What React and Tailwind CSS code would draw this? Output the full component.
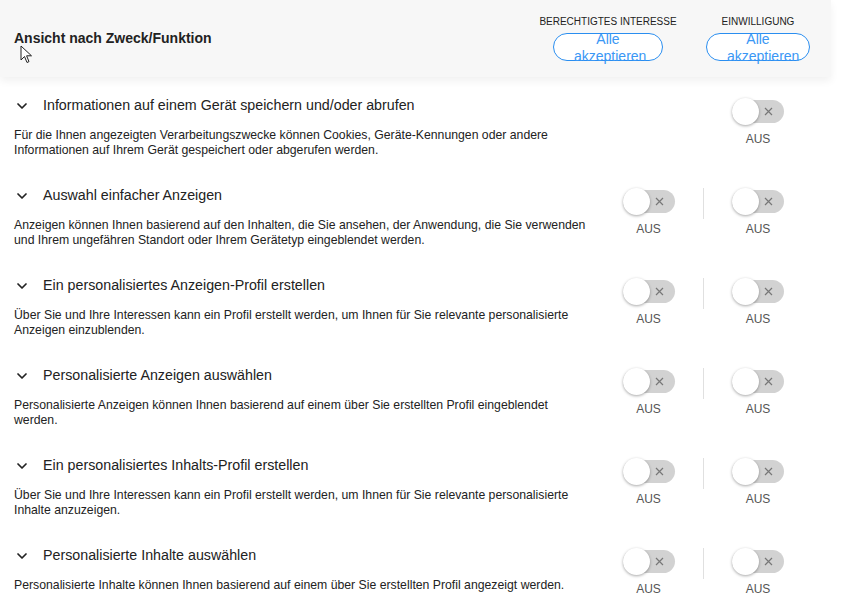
import { ChevronDown } from "lucide-react";

const purposes = [
  {
    title: "Informationen auf einem Gerät speichern und/oder abrufen",
    text: "Für die Ihnen angezeigten Verarbeitungszwecke können Cookies, Geräte-Kennungen oder andere Informationen auf Ihrem Gerät gespeichert oder abgerufen werden.",
    legit: false,
  },
  {
    title: "Auswahl einfacher Anzeigen",
    text: "Anzeigen können Ihnen basierend auf den Inhalten, die Sie ansehen, der Anwendung, die Sie verwenden und Ihrem ungefähren Standort oder Ihrem Gerätetyp eingeblendet werden.",
    legit: true,
  },
  {
    title: "Ein personalisiertes Anzeigen-Profil erstellen",
    text: "Über Sie und Ihre Interessen kann ein Profil erstellt werden, um Ihnen für Sie relevante personalisierte Anzeigen einzublenden.",
    legit: true,
  },
  {
    title: "Personalisierte Anzeigen auswählen",
    text: "Personalisierte Anzeigen können Ihnen basierend auf einem über Sie erstellten Profil eingeblendet werden.",
    legit: true,
  },
  {
    title: "Ein personalisiertes Inhalts-Profil erstellen",
    text: "Über Sie und Ihre Interessen kann ein Profil erstellt werden, um Ihnen für Sie relevante personalisierte Inhalte anzuzeigen.",
    legit: true,
  },
  {
    title: "Personalisierte Inhalte auswählen",
    text: "Personalisierte Inhalte können Ihnen basierend auf einem über Sie erstellten Profil angezeigt werden.",
    legit: true,
  },
];

function Toggle() {
  return (
    <div className="flex flex-col items-center">
      <div className="relative mt-[15px] h-[23px] w-[52px] rounded-full bg-[#d2d2d2]">
        <div className="absolute left-0 top-[-2px] h-[27px] w-[27px] rounded-full bg-white shadow-[0_1px_3px_rgba(0,0,0,0.35)]" />
        <svg className="absolute right-[11px] top-[7px]" width="9" height="9" viewBox="0 0 9 9">
          <path d="M1 1L8 8M8 1L1 8" stroke="#777" strokeWidth="1.2" fill="none" />
        </svg>
      </div>
      <div className="mt-[9px] text-[12px] leading-[14px] text-[#555]">AUS</div>
    </div>
  );
}

function HeaderColumn({ label, width }) {
  return (
    <div className="flex flex-col items-center">
      <div className="text-[10px] leading-[12px] text-[#222]">{label}</div>
      <button
        className={`${width} mt-[5px] h-[28px] rounded-full border border-[#2a8ef0] bg-white px-[20px] text-center text-[14px] leading-[17px] text-[#3a97f5]`}
      >
        <span className="block -mt-[3px]">Alle akzeptieren</span>
      </button>
    </div>
  );
}

export default function App() {
  return (
    <div
      className="relative min-h-screen w-[851px] bg-white text-[#222]"
      style={{ fontFamily: '"Liberation Sans", Arial, sans-serif' }}
    >
      {/* Header */}
      <div className="flex h-[77px] w-[831px] items-center bg-[#f7f7f7] shadow-[0_4px_8px_rgba(0,0,0,0.06)]">
        <h1 className="flex-1 pl-[14px] text-[14px] font-bold text-[#222]">Ansicht nach Zweck/Funktion</h1>
        <div className="flex w-[150px] justify-center">
          <HeaderColumn label="BERECHTIGTES INTERESSE" width="w-[110px]" />
        </div>
        <div className="ml-[20px] mr-[18px] flex w-[110px] justify-center">
          <HeaderColumn label="EINWILLIGUNG" width="w-[104px]" />
        </div>
      </div>

      {/* cursor */}
      <svg className="absolute left-[20px] top-[45px]" width="14" height="20" viewBox="0 0 14 20">
        <path d="M1 1L1 15L4.5 11.5L7 17.5L9 16.6L6.6 10.8L11.5 10.8Z" fill="white" stroke="#222" strokeWidth="1" strokeLinejoin="round" />
      </svg>

      {/* Purposes */}
      <div className="mt-[8px] w-[831px]">
        {purposes.map((p) => (
          <div key={p.title} className="flex h-[90px]">
            <div className="w-[593px] pl-[14px] pt-[11px]">
              <div className="flex h-[20px] items-center">
                <ChevronDown className="h-[16px] w-[16px] text-[#222]" strokeWidth={2.6} />
                <span className="ml-[13px] text-[14.25px] text-[#222]">{p.title}</span>
              </div>
              <p className="mt-[12px] text-[12.25px] leading-[15px] text-[#222]">{p.text}</p>
            </div>
            <div className="flex w-[110px] justify-center pl-[1px]">
              {p.legit && <Toggle />}
            </div>
            <div className="mt-[13px] h-[31px] w-px bg-[#e0e0e0]" style={{ opacity: p.legit ? 1 : 0 }} />
            <div className="flex w-[108px] justify-center">
              <Toggle />
            </div>
          </div>
        ))}
      </div>
    </div>
  );
}
